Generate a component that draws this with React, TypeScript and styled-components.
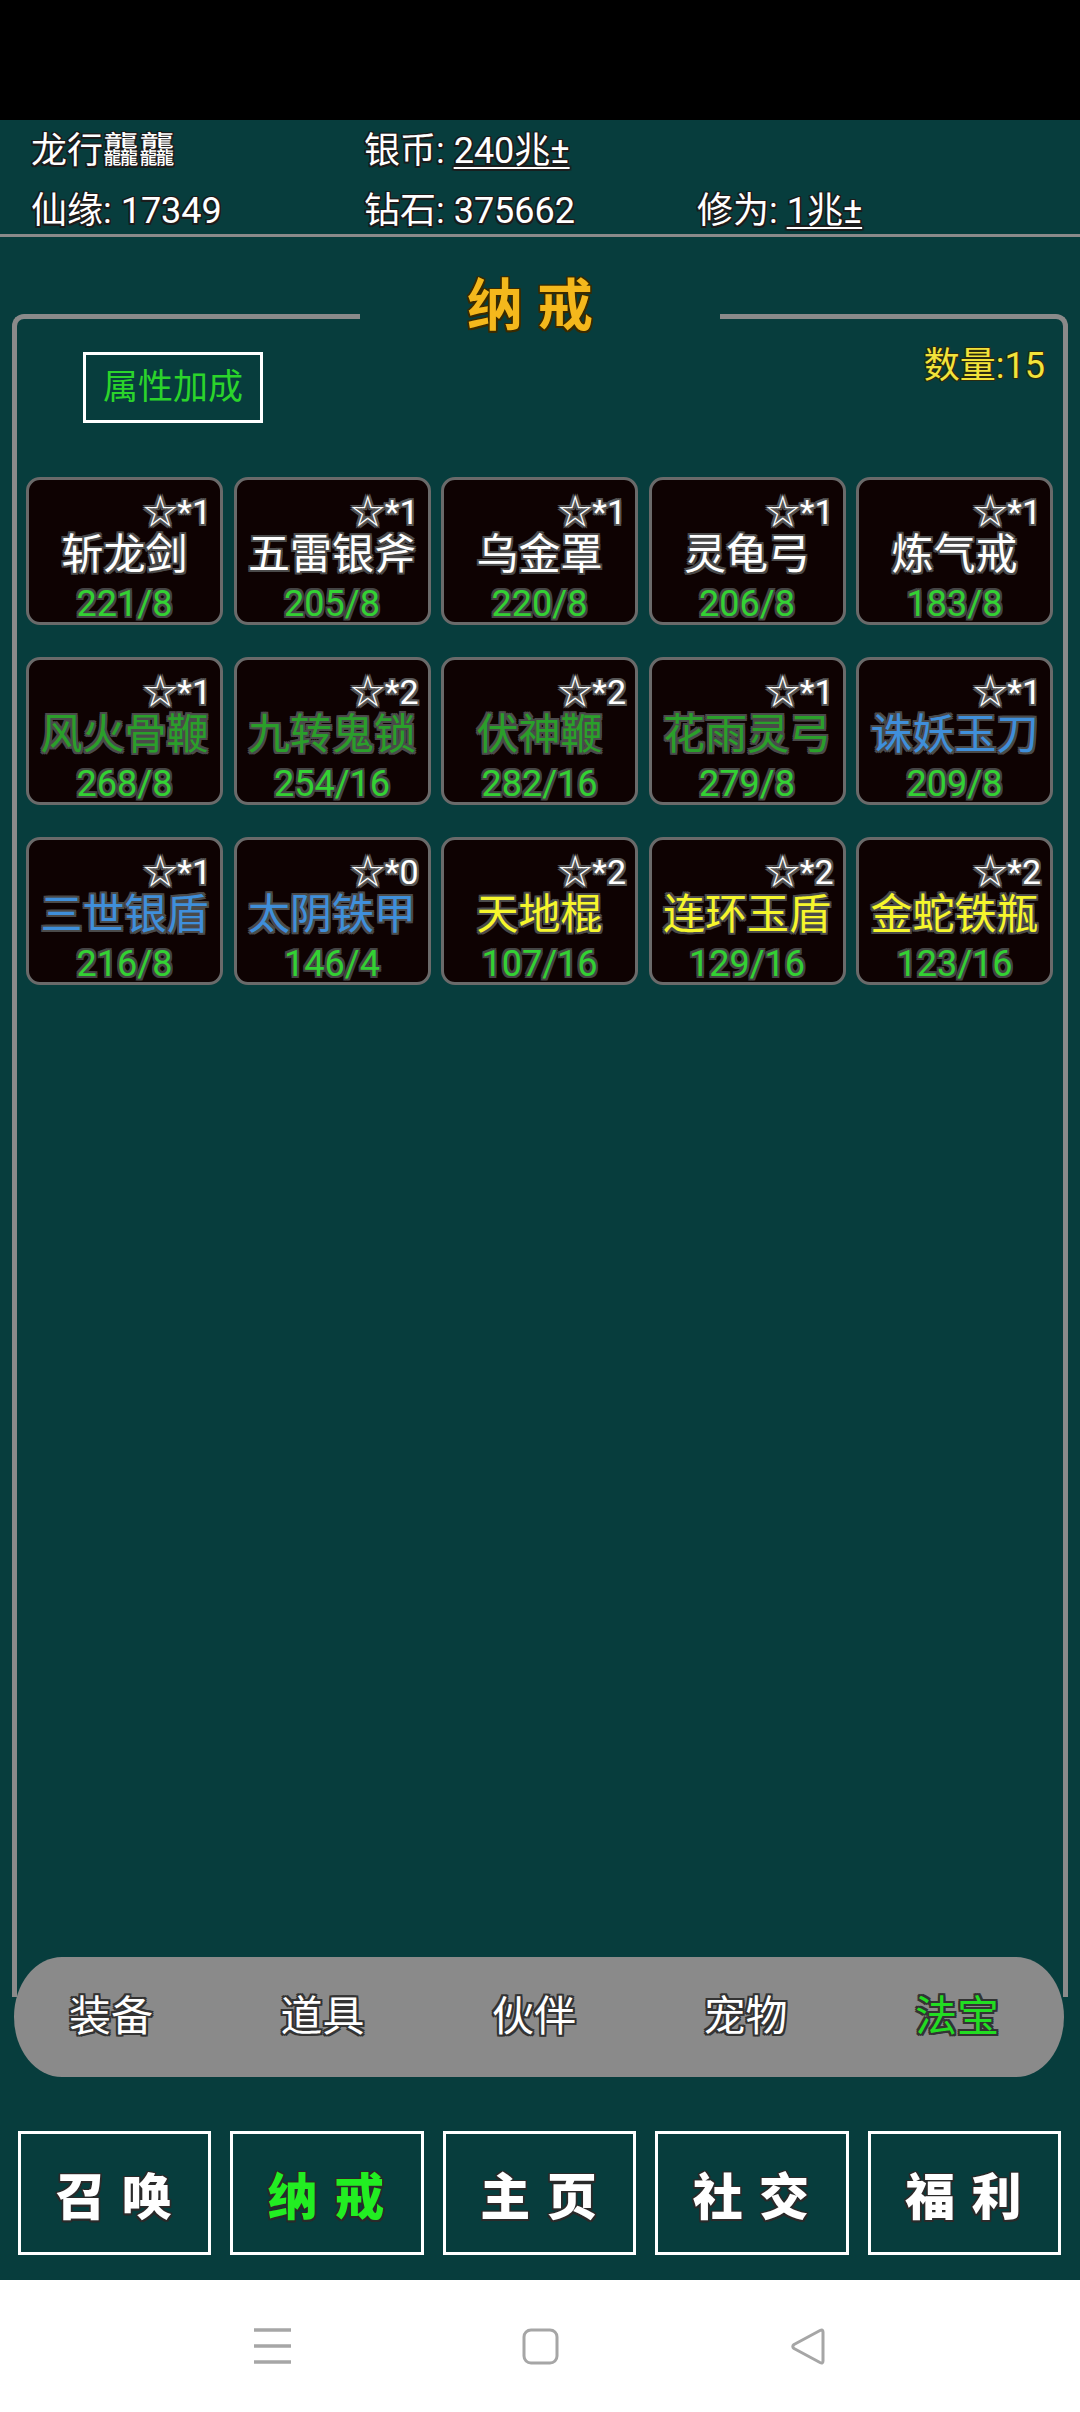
import styled, { createGlobalStyle } from "styled-components";

const GlobalStyle = createGlobalStyle`
  html, body {
    margin: 0;
    padding: 0;
    background: #ffffff;
  }
  body {
    font-family: Roboto, "Noto Sans CJK SC", sans-serif;
  }
`;

const outline = (c: string, w = 2) =>
  `${w}px 0 0 ${c}, -${w}px 0 0 ${c}, 0 ${w}px 0 ${c}, 0 -${w}px 0 ${c}, ${w}px ${w}px 0 ${c}, -${w}px -${w}px 0 ${c}, ${w}px -${w}px 0 ${c}, -${w}px ${w}px 0 ${c}`;

const colors = {
  bg: "#073d3d",
  line: "#8a8a8a",
  white: "#ffffff",
  green: "#2a9f2a",
  brightGreen: "#33d133",
  blue: "#3f8fdb",
  yellow: "#f6f62c",
  gold: "#f4b81c",
};

type Quality = "white" | "green" | "blue" | "yellow";

const qualityColor: Record<Quality, string> = {
  white: colors.white,
  green: colors.green,
  blue: colors.blue,
  yellow: colors.yellow,
};

const Screen = styled.div`
  width: 1080px;
  height: 2412px;
  display: flex;
  flex-direction: column;
  background: ${colors.bg};
  overflow: hidden;
`;

const StatusBar = styled.div`
  height: 120px;
  flex-shrink: 0;
  background: #000000;
`;

const Header = styled.div`
  height: 117px;
  flex-shrink: 0;
  box-sizing: border-box;
  padding: 5px 0 0 31px;
  display: grid;
  grid-template-columns: repeat(3, 333px);
  grid-template-rows: 52px 52px;
  row-gap: 8px;
  border-bottom: 3px solid ${colors.line};
`;

const Stat = styled.div`
  font-size: 36px;
  line-height: 52px;
  color: ${colors.white};
  white-space: nowrap;
  text-shadow: ${outline("#1c1c1c", 1.5)};
`;

const Link = styled.span`
  text-decoration: underline;
  text-decoration-thickness: 2px;
  text-underline-offset: 4px;
`;

const Panel = styled.section`
  flex: 1;
  margin: 35px 12px 0;
  display: flex;
  flex-direction: column;
`;

const PanelTop = styled.div`
  display: grid;
  grid-template-columns: 1fr 360px 1fr;
  align-items: end;
`;

const Corner = styled.div<{ side: "left" | "right" }>`
  height: 21px;
  box-sizing: border-box;
  border-top: 5px solid ${colors.line};
  border-${(p) => p.side}: 5px solid ${colors.line};
  border-top-${(p) => p.side}-radius: 12px;
`;

const Title = styled.h1`
  margin: 0;
  padding: 5px 20px 0 0;
  font-size: 56px;
  line-height: 58px;
  font-weight: 700;
  text-align: center;
  color: ${colors.gold};
  white-space: pre;
  text-shadow: ${outline("#3a2a00", 1.5)};
`;

const PanelBody = styled.div`
  flex: 1;
  display: flex;
  flex-direction: column;
  padding: 0 10px 0 9px;
  border-left: 5px solid ${colors.line};
  border-right: 5px solid ${colors.line};
`;

const Toolbar = styled.div`
  height: 142px;
  display: flex;
  justify-content: space-between;
  align-items: flex-start;
`;

const AttrButton = styled.button`
  margin: 17px 0 0 57px;
  padding: 0 17px;
  height: 71px;
  box-sizing: border-box;
  background: transparent;
  border: 3px solid ${colors.white};
  font-family: Roboto, "Noto Sans CJK SC", sans-serif;
  font-size: 35px;
  line-height: 65px;
  color: #2bd42b;
`;

const Count = styled.div`
  margin: 13px 8px 0 0;
  font-size: 36px;
  line-height: 36px;
  color: #f2e33a;
  text-shadow: ${outline("#2a2a10", 1)};
`;

const Grid = styled.div`
  display: grid;
  grid-template-columns: repeat(5, 197px);
  grid-auto-rows: 148px;
  column-gap: 10.5px;
  row-gap: 32px;
`;

const Card = styled.div`
  box-sizing: border-box;
  display: flex;
  flex-direction: column;
  padding: 14px 9px 0;
  background: #0e0202;
  border: 3px solid #6a6a6a;
  border-radius: 14px;
`;

const Star = styled.div`
  font-size: 34px;
  line-height: 36px;
  text-align: right;
  color: ${colors.white};
  text-shadow: ${outline("#555555", 2)};
`;

const Name = styled.div<{ quality: Quality }>`
  margin-top: 2px;
  font-size: 42px;
  line-height: 46px;
  text-align: center;
  white-space: nowrap;
  color: ${(p) => qualityColor[p.quality]};
  text-shadow: ${outline("#4a4a4a", 2)};
`;

const Value = styled.div`
  margin-top: 6px;
  font-size: 36px;
  line-height: 40px;
  text-align: center;
  color: ${colors.brightGreen};
  text-shadow: ${outline("#444444", 2)};
`;

const TabBar = styled.nav`
  position: relative;
  margin: -40px 4px 0 2px;
  height: 120px;
  flex-shrink: 0;
  display: flex;
  justify-content: space-between;
  align-items: center;
  padding: 0 65px 0 55px;
  background: #8a8a8a;
  border-radius: 48px / 60px;
`;

const Tab = styled.span<{ active?: boolean }>`
  font-size: 42px;
  line-height: 50px;
  color: ${(p) => (p.active ? "#22dd22" : colors.white)};
  text-shadow: ${outline("#333333", 2)};
`;

const BottomNav = styled.div`
  margin-top: 54px;
  height: 124px;
  flex-shrink: 0;
  display: grid;
  grid-template-columns: repeat(5, 1fr);
  column-gap: 19px;
  padding: 0 19px 0 18px;
`;

const NavButton = styled.button<{ active?: boolean }>`
  box-sizing: border-box;
  background: transparent;
  border: 3px solid ${colors.white};
  padding: 0;
  font-family: Roboto, "Noto Sans CJK SC", sans-serif;
  font-size: 50px;
  font-weight: 900;
  letter-spacing: 2px;
  white-space: pre;
  color: ${(p) => (p.active ? "#22ee22" : colors.white)};
  text-shadow: ${outline("#2a2a2a", 1.5)};
`;

const SystemNav = styled.div`
  margin-top: 25px;
  height: 132px;
  flex-shrink: 0;
  background: #ffffff;
  display: grid;
  grid-template-columns: repeat(3, 268px);
  justify-content: center;
  justify-items: center;
  align-items: center;
`;

const items: { name: string; star: number; value: string; quality: Quality }[] = [
  { name: "斩龙剑", star: 1, value: "221/8", quality: "white" },
  { name: "五雷银斧", star: 1, value: "205/8", quality: "white" },
  { name: "乌金罩", star: 1, value: "220/8", quality: "white" },
  { name: "灵龟弓", star: 1, value: "206/8", quality: "white" },
  { name: "炼气戒", star: 1, value: "183/8", quality: "white" },
  { name: "风火骨鞭", star: 1, value: "268/8", quality: "green" },
  { name: "九转鬼锁", star: 2, value: "254/16", quality: "green" },
  { name: "伏神鞭", star: 2, value: "282/16", quality: "green" },
  { name: "花雨灵弓", star: 1, value: "279/8", quality: "green" },
  { name: "诛妖玉刀", star: 1, value: "209/8", quality: "blue" },
  { name: "三世银盾", star: 1, value: "216/8", quality: "blue" },
  { name: "太阴铁甲", star: 0, value: "146/4", quality: "blue" },
  { name: "天地棍", star: 2, value: "107/16", quality: "yellow" },
  { name: "连环玉盾", star: 2, value: "129/16", quality: "yellow" },
  { name: "金蛇铁瓶", star: 2, value: "123/16", quality: "yellow" },
];

const tabs = ["装备", "道具", "伙伴", "宠物", "法宝"];
const navs = ["召 唤", "纳 戒", "主 页", "社 交", "福 利"];

const MenuIcon = () => (
  <svg width="37" height="36" viewBox="0 0 37 36">
    <g stroke="#a6a6a6" strokeWidth="3.5">
      <line x1="0" y1="2" x2="37" y2="2" />
      <line x1="0" y1="18" x2="37" y2="18" />
      <line x1="0" y1="34" x2="37" y2="34" />
    </g>
  </svg>
);

const HomeIcon = () => (
  <svg width="37" height="37" viewBox="0 0 37 37">
    <rect x="2" y="2" width="33" height="33" rx="7" fill="none" stroke="#a6a6a6" strokeWidth="3" />
  </svg>
);

const BackIcon = () => (
  <svg width="37" height="37" viewBox="0 0 37 37">
    <path
      d="M33 4 L33 33 Q33 36 30 34.5 L4 20.5 Q1.5 18.5 4 16.5 L30 2.5 Q33 1 33 4 Z"
      fill="none"
      stroke="#a6a6a6"
      strokeWidth="3"
      strokeLinejoin="round"
    />
  </svg>
);

export default function App() {
  return (
    <>
      <GlobalStyle />
      <Screen>
        <StatusBar />
        <Header>
          <Stat>龙行龘龘</Stat>
          <Stat>
            银币: <Link>240兆±</Link>
          </Stat>
          <Stat />
          <Stat>仙缘: 17349</Stat>
          <Stat>钻石: 375662</Stat>
          <Stat>
            修为: <Link>1兆±</Link>
          </Stat>
        </Header>

        <Panel>
          <PanelTop>
            <Corner side="left" />
            <Title>纳 戒</Title>
            <Corner side="right" />
          </PanelTop>
          <PanelBody>
            <Toolbar>
              <AttrButton>属性加成</AttrButton>
              <Count>数量:15</Count>
            </Toolbar>
            <Grid>
              {items.map((item) => (
                <Card key={item.name}>
                  <Star>☆*{item.star}</Star>
                  <Name quality={item.quality}>{item.name}</Name>
                  <Value>{item.value}</Value>
                </Card>
              ))}
            </Grid>
          </PanelBody>
          <TabBar>
            {tabs.map((t) => (
              <Tab key={t} active={t === "法宝"}>
                {t}
              </Tab>
            ))}
          </TabBar>
        </Panel>

        <BottomNav>
          {navs.map((n) => (
            <NavButton key={n} active={n === "纳 戒"}>
              {n}
            </NavButton>
          ))}
        </BottomNav>

        <SystemNav>
          <MenuIcon />
          <HomeIcon />
          <BackIcon />
        </SystemNav>
      </Screen>
    </>
  );
}
